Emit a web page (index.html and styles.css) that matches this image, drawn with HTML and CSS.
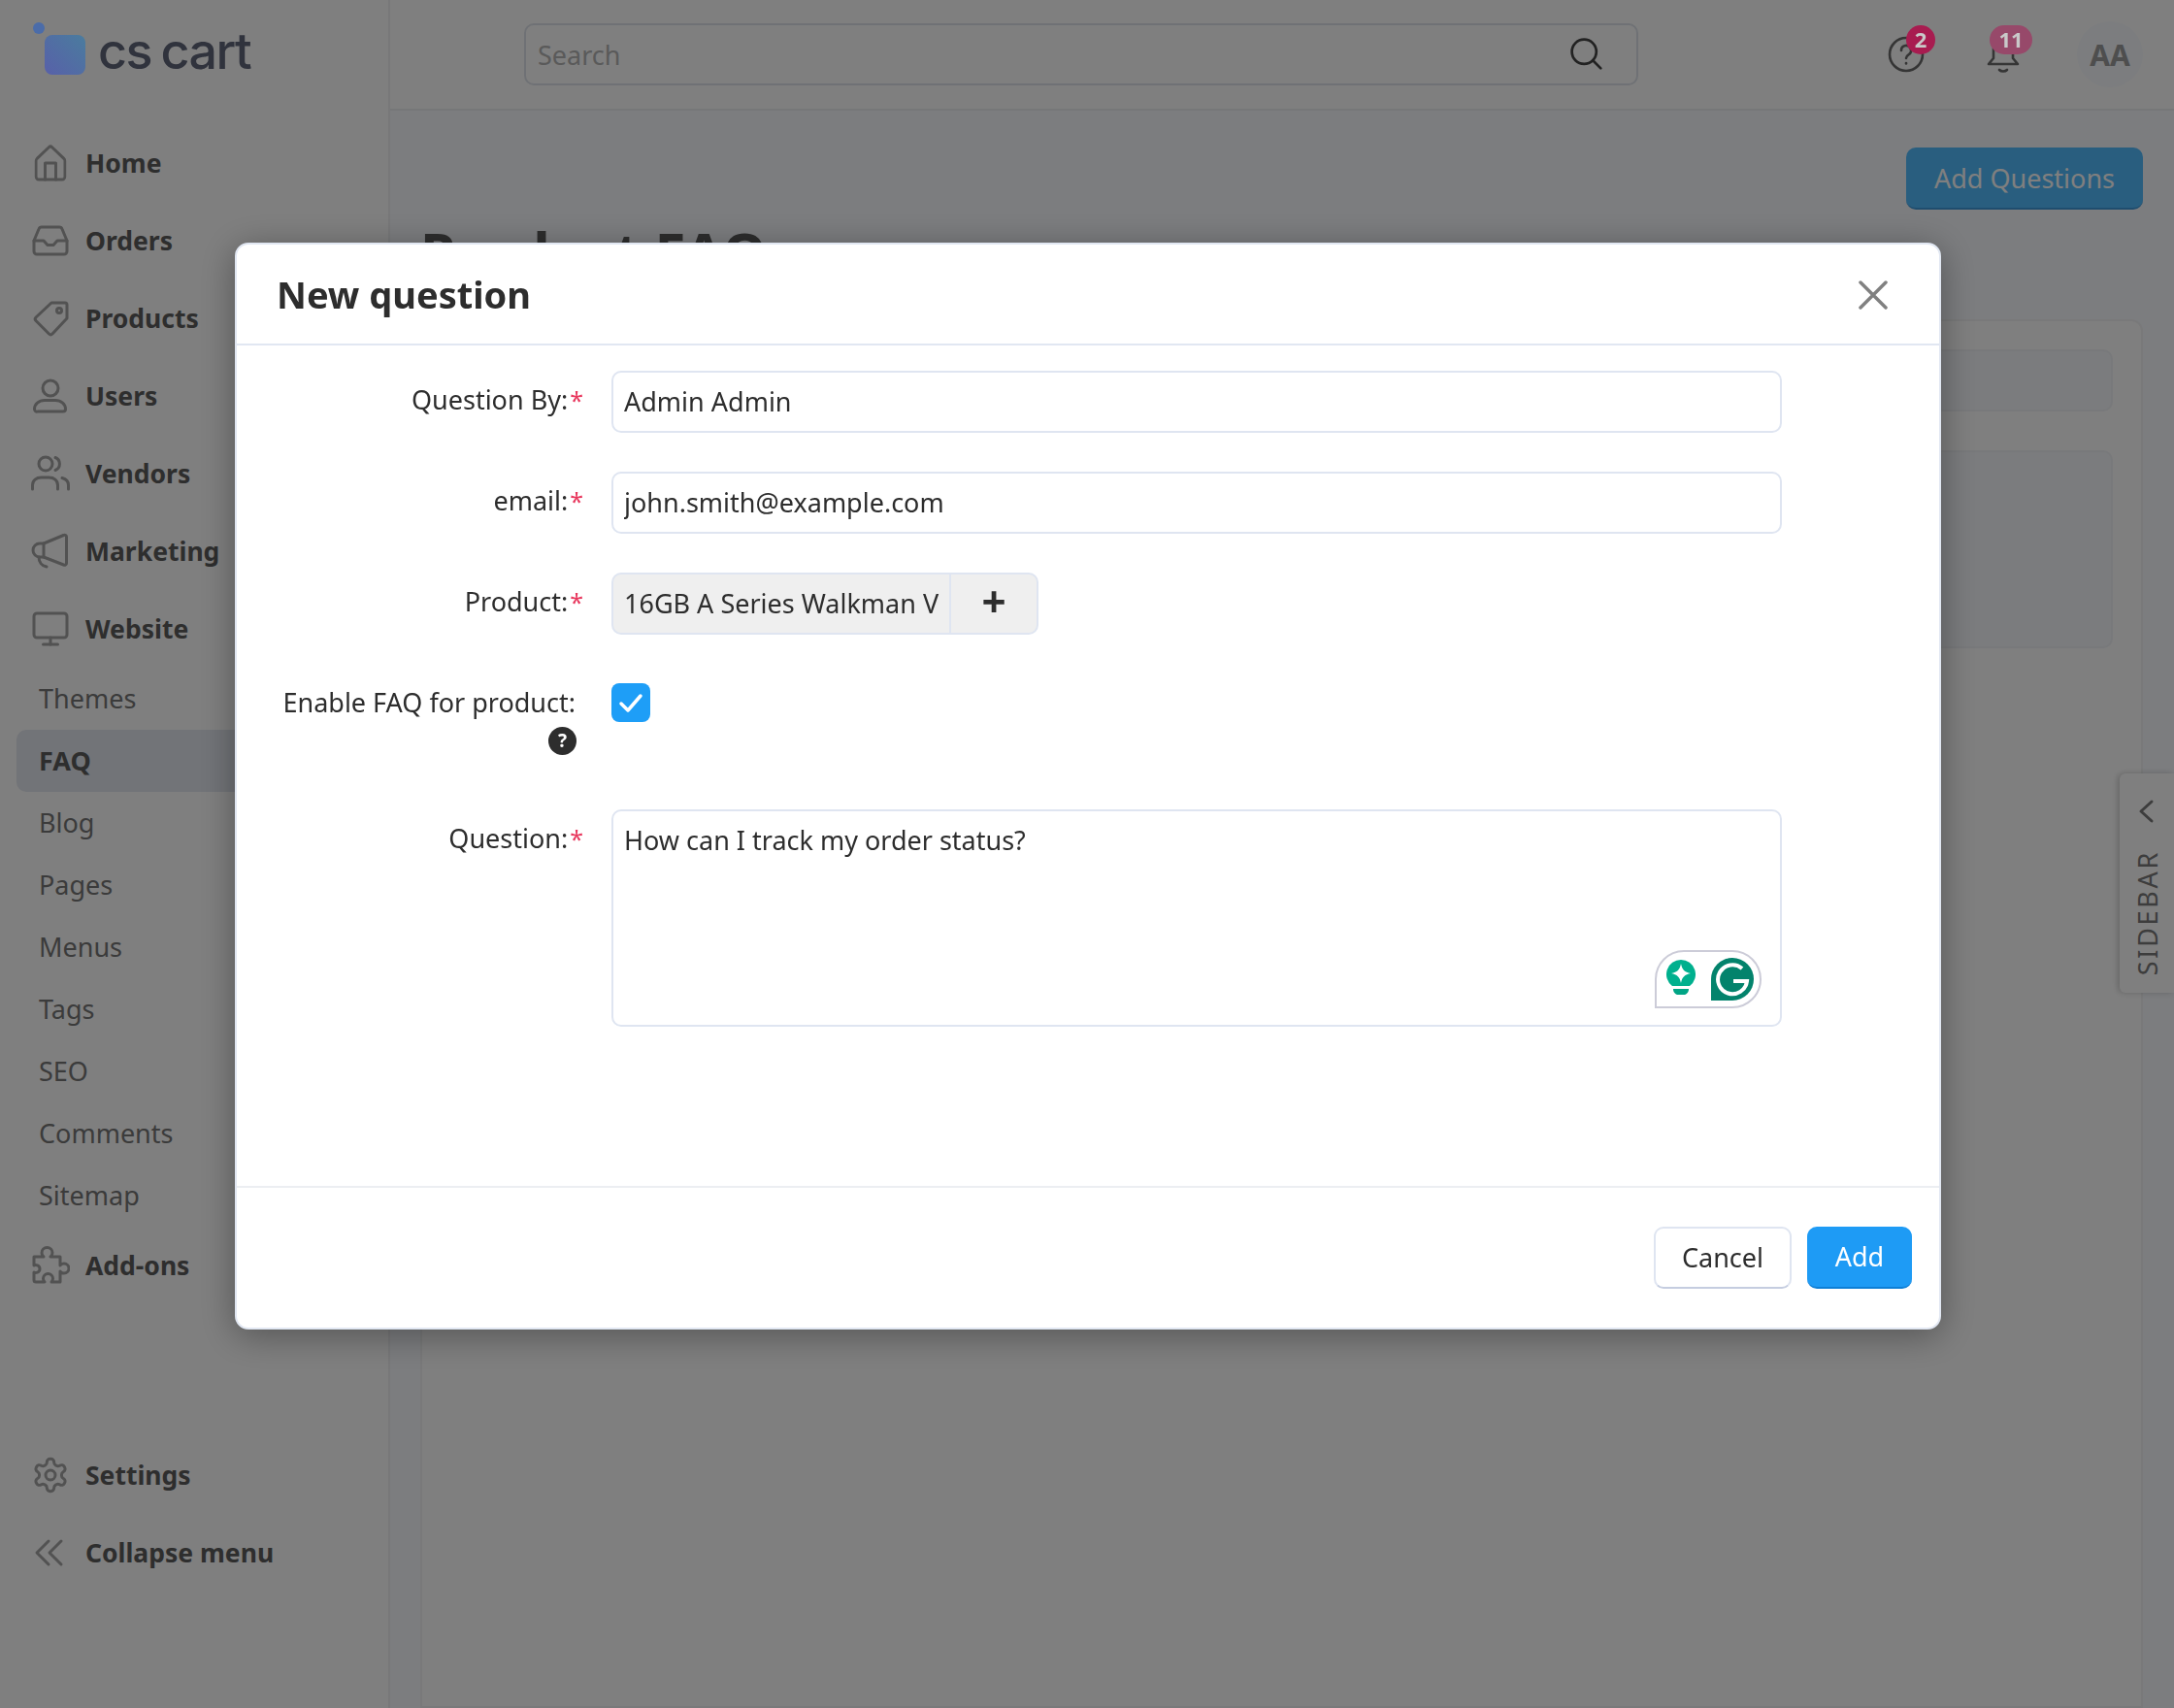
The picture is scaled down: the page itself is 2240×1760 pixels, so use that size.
FILE: index.html
```html
<!DOCTYPE html>
<html lang="en">

<head>
  <meta charset="UTF-8">
  <title>Product FAQ</title>
  <link rel="stylesheet" href="styles.css">
</head>

<body>
  <div class="app">
    <div class="sidebar">
      <div class="logo">
        <span class="logo-mark"><span class="logo-dot"></span><span class="logo-square"></span></span>
        <span class="logo-text">cs cart</span>
      </div>

      <a class="nav-item">
        <svg class="nav-icon" viewBox="0 0 40 40"><path d="M4.5 15.5 18 3.8a3 3 0 0 1 4 0l13.5 11.700a3 3 0 0 1 1 2.300V34a3 3 0 0 1-3 3h-27a3 3 0 0 1-3-3V17.800a3 3 0 0 1 1-2.300z" transform="translate(2 0) scale(.9 1)"/><path d="M14.500 37V20h11v17"/></svg>
        Home
      </a>
      <a class="nav-item">
        <svg class="nav-icon" viewBox="0 0 40 40"><path d="M3 20 8 8a3 3 0 0 1 3-2h18a3 3 0 0 1 3 2l5 12v11a3 3 0 0 1-3 3H6a3 3 0 0 1-3-3z"/><path d="M3 20h10l4 4.500h6l4-4.500h10"/></svg>
        Orders
      </a>
      <a class="nav-item">
        <svg class="nav-icon" viewBox="0 0 40 40"><path d="M21 4h14a2 2 0 0 1 2 2v14L22 36a2.500 2.500 0 0 1-3.500 0L5 22.500a2.500 2.500 0 0 1 0-3.500z"/><circle cx="29" cy="12" r="2.500"/></svg>
        Products
      </a>
      <a class="nav-item">
        <svg class="nav-icon" viewBox="0 0 40 40"><circle cx="20" cy="12" r="8"/><path d="M7 37h26a2.500 2.500 0 0 0 2.500-2.500c0-5-4.500-9-10.500-9H14c-6 0-10.500 4-10.500 9A2.500 2.500 0 0 0 7 37z" transform="translate(0 -1)"/></svg>
        Users
      </a>
      <a class="nav-item">
        <svg class="nav-icon" viewBox="0 0 40 40"><circle cx="15" cy="10" r="7"/><path d="M25 3.500a7 7 0 0 1 0 13"/><path d="M1.500 36v-4c0-5 4-8 9-8h8c5 0 9 3 9 8v4"/><path d="M32 24.500c4 1 6.500 4 6.500 7.500v4"/></svg>
        Vendors
      </a>
      <a class="nav-item">
        <svg class="nav-icon" viewBox="0 0 40 40"><path d="M33.500 4.500 13 13H9a7 7 0 0 0 0 14h4l20.500 8a2 2 0 0 0 3-1.800V6.300a2 2 0 0 0-3-1.800z" transform="translate(0 -1)"/><path d="M13 12v14"/><path d="M8 26c0 5 3 9 8 10"/></svg>
        Marketing
      </a>
      <a class="nav-item">
        <svg class="nav-icon" viewBox="0 0 40 40"><rect x="3" y="4" width="34" height="25" rx="3"/><path d="M20 29v7"/><path d="M12.500 36h15"/></svg>
        Website
      </a>

      <a class="sub-item">Themes</a>
      <a class="sub-item active">FAQ</a>
      <a class="sub-item">Blog</a>
      <a class="sub-item">Pages</a>
      <a class="sub-item">Menus</a>
      <a class="sub-item">Tags</a>
      <a class="sub-item">SEO</a>
      <a class="sub-item">Comments</a>
      <a class="sub-item">Sitemap</a>

      <a class="nav-item">
        <svg class="nav-icon" viewBox="0 0 40 40"><path d="M3 11h10c-1.500-1-2-2.500-2-4a5.500 5.500 0 0 1 11 0c0 1.500-.5 3-2 4h10v9c1-1.500 2.500-2 4-2a5 5 0 0 1 0 10c-1.500 0-3-.5-4-2v11h-9c1-1 1.500-2 1.500-3.500a5 5 0 0 0-10 0c0 1.500.5 2.500 1.500 3.500H5a2 2 0 0 1-2-2v-8c1.500 1 6 .5 6-3.500s-4.500-4.500-6-3.500z"/></svg>
        Add-ons
      </a>

      <div class="sidebar-bottom">
        <a class="nav-item">
          <svg class="nav-icon" viewBox="0 0 24 24"><path class="thin" d="M12.220 2h-.44a2 2 0 0 0-2 2v.18a2 2 0 0 1-1 1.730l-.43.25a2 2 0 0 1-2 0l-.15-.08a2 2 0 0 0-2.730.73l-.22.38a2 2 0 0 0 .73 2.730l.15.1a2 2 0 0 1 1 1.720v.51a2 2 0 0 1-1 1.740l-.15.09a2 2 0 0 0-.73 2.730l.22.38a2 2 0 0 0 2.730.73l.15-.08a2 2 0 0 1 2 0l.43.25a2 2 0 0 1 1 1.730V20a2 2 0 0 0 2 2h.44a2 2 0 0 0 2-2v-.18a2 2 0 0 1 1-1.730l.43-.25a2 2 0 0 1 2 0l.15.08a2 2 0 0 0 2.730-.73l.22-.39a2 2 0 0 0-.73-2.730l-.15-.08a2 2 0 0 1-1-1.740v-.5a2 2 0 0 1 1-1.740l.15-.09a2 2 0 0 0 .73-2.730l-.22-.38a2 2 0 0 0-2.730-.73l-.15.08a2 2 0 0 1-2 0l-.43-.25a2 2 0 0 1-1-1.730V4a2 2 0 0 0-2-2z"/><circle class="thin" cx="12" cy="12" r="3"/></svg>
          Settings
        </a>
        <a class="nav-item">
          <svg class="nav-icon" viewBox="0 0 40 40"><path d="M18 8 6 20l12 12"/><path d="M31 8 19 20l12 12"/></svg>
          Collapse menu
        </a>
      </div>
    </div>

    <div class="main">
      <div class="topbar">
        <div class="search">
          <span class="search-text">Search</span>
          <svg class="search-icon" viewBox="0 0 40 40"><circle cx="18" cy="17" r="14"/><path d="m28 27 9 9"/></svg>
        </div>
        <div class="topbar-icons">
          <span class="top-icon help-icon">
            <svg viewBox="0 0 40 40"><circle cx="20" cy="20" r="17"/><path d="M15 16a5 5 0 1 1 7.500 4.300c-1.500.9-2.500 1.700-2.500 3.700"/><path d="M20 29v.5"/></svg>
            <span class="badge badge-round">2</span>
          </span>
          <span class="top-icon bell-icon">
            <svg viewBox="0 0 40 40"><path d="M5 30h30l-5-6V15a10 10 0 0 0-20 0v9z"/><path d="M16 36c2 2 6 2 8 0"/></svg>
            <span class="badge badge-pill">11</span>
          </span>
          <span class="avatar">AA</span>
        </div>
      </div>

      <div class="content">
        <div class="toolbar">
          <button class="btn btn-toolbar">Add Questions</button>
        </div>
        <h1 class="page-title">Product FAQ</h1>
        <div class="card">
          <div class="card-bar"></div>
          <div class="card-box"></div>
        </div>
      </div>

      <div class="sidebar-tab">
        <svg class="sidebar-tab-icon" viewBox="0 0 20 28"><path d="M15 4 4 14l11 10"/></svg>
        <span class="sidebar-tab-text">SIDEBAR</span>
      </div>
    </div>
  </div>

  <div class="overlay"></div>

  <div class="modal">
    <div class="modal-header">
      <h2>New question</h2>
      <svg class="modal-close" viewBox="0 0 30 30"><path d="M2 2l26 26M28 2 2 28"/></svg>
    </div>

    <div class="modal-body">
      <div class="field">
        <label class="field-label">Question By:<span class="req">*</span></label>
        <input class="input" type="text" value="Admin Admin">
      </div>
      <div class="field">
        <label class="field-label">email:<span class="req">*</span></label>
        <input class="input" type="text" value="john.smith@example.com">
      </div>
      <div class="field field-product">
        <label class="field-label">Product:<span class="req">*</span></label>
        <div class="picker">
          <span class="picker-value">16GB A Series Walkman V</span>
          <span class="picker-add">+</span>
        </div>
      </div>
      <div class="field field-check">
        <label class="field-label no-req">
          Enable FAQ for product:
          <span class="help-dot">?</span>
        </label>
        <span class="checkbox">
          <svg viewBox="0 0 40 40"><path d="m10 21 7 7 13-15"/></svg>
        </span>
      </div>
      <div class="field">
        <label class="field-label">Question:<span class="req">*</span></label>
        <div class="textarea-wrap">
          <textarea class="textarea">How can I track my order status?</textarea>
          <div class="grammarly">
            <svg class="grammarly-bulb" viewBox="0 0 30 38">
              <path d="M15 0a15 15 0 0 1 9 27H6A15 15 0 0 1 15 0z" fill="#00b08e"/>
              <path d="M15 4c1 6 4 9 10 10-6 1-9 4-10 10-1-6-4-9-10-10 6-1 9-4 10-10z" fill="#fff"/>
              <path d="M7 30h16c0 4-3 6-5 6h-6c-2 0-5-2-5-6z" fill="#00a585"/>
            </svg>
            <svg class="grammarly-g" viewBox="0 0 44 44">
              <path d="M0 44V22a22 22 0 1 1 22 22z" fill="#03836c"/>
              <path d="M32 11A15 15 0 1 0 37 24H23" fill="none" stroke="#fff" stroke-width="4"/>
            </svg>
          </div>
        </div>
      </div>
    </div>

    <div class="modal-footer">
      <button class="btn btn-cancel">Cancel</button>
      <button class="btn btn-add">Add</button>
    </div>
  </div>
</body>

</html>
```

FILE: styles.css
```css
* {
  margin: 0;
  padding: 0;
  box-sizing: border-box;
}

body {
  font-family: "Noto Sans", "Open Sans", sans-serif;
  font-size: 27px;
  height: 1760px;
  overflow: hidden;
  background-color: #f8fafe;
  color: #5a5a5a;
}

.app {
  display: flex;
  height: 100%;
}

/* sidebar */
.sidebar {
  width: 402px;
  flex-shrink: 0;
  display: flex;
  flex-direction: column;
  background-color: #fff;
  border-right: 2px solid #f0f1f3;
  padding-bottom: 120px;
}

.logo {
  height: 128px;
  padding: 20px 0 0 32px;
  display: flex;
  align-items: flex-start;
}

.logo-mark {
  width: 56px;
  height: 56px;
  position: relative;
  z-index: 1001;
  flex-shrink: 0;
}

.logo-dot {
  position: absolute;
  left: 2px;
  top: 3px;
  width: 12px;
  height: 12px;
  border-radius: 50%;
  background-color: #4b6ca9;
}

.logo-square {
  position: absolute;
  left: 14px;
  top: 16px;
  width: 42px;
  height: 41px;
  border-radius: 8px;
  background: linear-gradient(45deg, #5860a9, #4a7c9e);
}

.logo-text {
  margin-left: 13px;
  font-family: Inter, sans-serif;
  font-size: 52px;
  line-height: 66px;
  font-weight: 500;
  letter-spacing: -1.5px;
  color: #60667a;
  word-spacing: -3px;
}

.nav-item {
  height: 80px;
  flex-shrink: 0;
  display: flex;
  align-items: center;
  padding: 0 0 1px 32px;
  gap: 16px;
  font-weight: 700;
  font-size: 26.500px;
  color: #5c5c5c;
}

.nav-icon {
  width: 40px;
  height: 40px;
  flex-shrink: 0;
  fill: none;
  stroke: #a4a4a4;
  stroke-width: 3;
  stroke-linecap: round;
  stroke-linejoin: round;
}

.nav-icon .thin {
  stroke-width: 1.800;
}

.sub-item {
  height: 64px;
  flex-shrink: 0;
  display: flex;
  align-items: center;
  margin-left: 17px;
  padding: 0 0 2px 23px;
  border-radius: 10px 0 0 10px;
  color: #767676;
}

.sub-item.active {
  background-color: #e4e8f0;
  font-weight: 700;
  color: #5c5c5c;
}

.sidebar-bottom {
  margin-top: auto;
}

/* main */
.main {
  flex: 1;
  display: flex;
  flex-direction: column;
  position: relative;
}

.topbar {
  height: 114px;
  flex-shrink: 0;
  display: flex;
  align-items: center;
  background-color: #fff;
  border-bottom: 2px solid #eceef1;
  padding: 0 32px 0 138px;
}

.search {
  width: 1148px;
  height: 64px;
  display: flex;
  align-items: center;
  justify-content: space-between;
  border: 2px solid #dfe3ea;
  border-radius: 10px;
  padding: 0 34px 0 12px;
  color: #b4b4b4;
}

.search-icon {
  width: 36px;
  height: 36px;
  fill: none;
  stroke: #444;
  stroke-width: 3;
  stroke-linecap: round;
}

.topbar-icons {
  flex: 1;
  display: flex;
  align-items: center;
}

.top-icon {
  position: relative;
  width: 40px;
  height: 40px;
  display: block;
}

.top-icon svg {
  width: 40px;
  height: 40px;
  fill: none;
  stroke: #6a6a6a;
  stroke-width: 2.600;
  stroke-linecap: round;
  stroke-linejoin: round;
  display: block;
}

.help-icon {
  margin-left: 256px;
}

.bell-icon {
  margin-left: 60px;
}

.badge {
  position: absolute;
  z-index: 1100;
  top: -10px;
  height: 30px;
  font-size: 22px;
  line-height: 28px;
  font-weight: 700;
  text-align: center;
  color: #c9c9c9;
}

.badge-round {
  left: 20px;
  width: 30px;
  border-radius: 50%;
  background-color: #a81c50;
}

.badge-pill {
  left: 6px;
  width: 44px;
  border-radius: 15px;
  background-color: #97496a;
}

.avatar {
  width: 68px;
  height: 68px;
  margin-left: 56px;
  border-radius: 50%;
  background-color: #f8fbff;
  color: #9c9c9c;
  font-size: 30px;
  font-weight: 700;
  display: flex;
  align-items: center;
  justify-content: center;
}

.content {
  flex: 1;
  padding: 38px 32px 0 31px;
  display: flex;
  flex-direction: column;
  min-height: 0;
}

.toolbar {
  display: flex;
  justify-content: flex-end;
}

.btn {
  font-family: inherit;
  font-size: 27px;
  border-radius: 10px;
  cursor: pointer;
}

.btn-toolbar {
  width: 244px;
  height: 64px;
  border: none;
  border-bottom: 2px solid #3f9bdc;
  background-color: #52bcff;
  color: #fff;
}

.page-title {
  margin-top: 12px;
  height: 64px;
  font-size: 58px;
  line-height: 64px;
  font-weight: 700;
  color: #5a5a5a;
}

.card {
  flex: 1;
  margin-top: 37px;
  padding: 29px 29px 29px 30px;
  border: 2px solid #f2f3f4;
  border-radius: 12px 12px 0 0;
  background-color: #fff;
}

.card-bar,
.card-box {
  border: 2px solid #f0f2f6;
  border-radius: 10px;
  background-color: #f6f8fc;
}

.card-bar {
  height: 64px;
}

.card-box {
  height: 204px;
  margin-top: 40px;
}

.sidebar-tab {
  position: absolute;
  right: 0;
  top: 797px;
  width: 56px;
  height: 226px;
  display: flex;
  flex-direction: column;
  align-items: center;
  border-radius: 6px 0 0 6px;
  background-color: #fff;
  box-shadow: -2px 0 6px rgba(0, 0, 0, 0.2);
}

.sidebar-tab-icon {
  width: 20px;
  height: 28px;
  margin-top: 25px;
  fill: none;
  stroke: #7a7a7a;
  stroke-width: 3;
  stroke-linecap: round;
  stroke-linejoin: round;
}

.sidebar-tab-text {
  margin-top: 26px;
  writing-mode: vertical-rl;
  transform: rotate(180deg);
  font-size: 27px;
  letter-spacing: 2.700px;
  color: #7a7a7a;
}

/* modal */
.overlay {
  position: fixed;
  top: 0;
  left: 0;
  right: 0;
  bottom: 0;
  z-index: 1000;
  background-color: rgba(0, 0, 0, 0.5);
}

.modal {
  position: fixed;
  z-index: 1050;
  left: 242px;
  top: 250px;
  width: 1758px;
  height: 1120px;
  display: flex;
  flex-direction: column;
  background-color: #fff;
  border: 2px solid #e1e7f2;
  border-radius: 14px;
  box-shadow: 0 6px 36px rgba(0, 0, 0, 0.35);
  color: #2d2d2d;
}

.modal-header {
  height: 104px;
  flex-shrink: 0;
  display: flex;
  align-items: center;
  justify-content: space-between;
  padding: 0 53px 0 41px;
  border-bottom: 2px solid #e1e7f2;
}

.modal-header h2 {
  font-size: 38px;
  font-weight: 700;
}

.modal-close {
  width: 30px;
  height: 30px;
  margin-top: 2px;
  fill: none;
  stroke: #808080;
  stroke-width: 3.500;
  stroke-linecap: round;
}

.modal-body {
  flex: 1;
  padding-top: 26px;
}

.field {
  display: grid;
  grid-template-columns: 357px 1206px;
  column-gap: 29px;
  margin-bottom: 40px;
}

.field-product {
  margin-bottom: 50px;
}

.field-label {
  text-align: right;
  line-height: 40px;
  padding-top: 10px;
}

.field-label.no-req {
  padding-top: 0;
  padding-right: 8px;
}

.req {
  color: #e8375d;
  font-size: 25px;
  margin-left: 2px;
}

.input,
.textarea {
  width: 100%;
  font-family: inherit;
  font-size: 27px;
  color: #2d2d2d;
  background-color: #fff;
  border: 2px solid #dfe5f1;
  border-radius: 10px;
  outline: none;
  padding: 0 11px 2px;
}

.input {
  height: 64px;
}

.textarea-wrap {
  position: relative;
  height: 224px;
}

.textarea {
  height: 100%;
  resize: none;
  padding-top: 10px;
  line-height: 40px;
  display: block;
}

.grammarly {
  position: absolute;
  right: 21px;
  bottom: 19px;
  width: 110px;
  height: 60px;
  display: flex;
  align-items: center;
  justify-content: flex-end;
  gap: 16px;
  padding-right: 6px;
  background-color: #fff;
  border: 2px solid #ccccd8;
  border-radius: 30px 30px 30px 0;
}

.grammarly-bulb {
  width: 30px;
  height: 38px;
  margin-top: -2px;
}

.grammarly-g {
  width: 44px;
  height: 44px;
}

.picker {
  width: 440px;
  height: 64px;
  display: flex;
  background-color: #efefef;
  border: 2px solid #dfe5f1;
  border-radius: 10px;
}

.picker-value {
  width: 346px;
  padding-left: 11px;
  line-height: 60px;
  white-space: nowrap;
  overflow: hidden;
}

.picker-add {
  flex: 1;
  border-left: 2px solid #dfe5f1;
  text-align: center;
  font-size: 44px;
  line-height: 54px;
  font-weight: 700;
}

.field-check {
  margin-bottom: 56px;
}

.help-dot {
  display: block;
  width: 29px;
  height: 29px;
  margin: 5px -1px 0 auto;
  border-radius: 50%;
  background-color: #2d2d2d;
  color: #fff;
  font-size: 19px;
  line-height: 29px;
  font-weight: 700;
  text-align: center;
}

.checkbox {
  width: 40px;
  height: 40px;
  display: block;
  border-radius: 8px;
  background-color: #1e9ef7;
}

.checkbox svg {
  display: block;
  fill: none;
  stroke: #fff;
  stroke-width: 3.500;
  stroke-linecap: round;
  stroke-linejoin: round;
}

.modal-footer {
  height: 146px;
  flex-shrink: 0;
  display: flex;
  justify-content: flex-end;
  align-items: flex-start;
  gap: 16px;
  padding: 40px 28px 0 0;
  border-top: 2px solid #eceef2;
}

.btn-cancel {
  width: 142px;
  height: 64px;
  padding-bottom: 2px;
  background-color: #fff;
  color: #2d2d2d;
  border: 2px solid #dfe5f1;
  border-bottom-color: #c5cde0;
}

.btn-add {
  width: 108px;
  height: 64px;
  padding-bottom: 2px;
  background-color: #1e9bf5;
  color: #fff;
  border: none;
  border-bottom: 2px solid #0d7fd6;
}
```
